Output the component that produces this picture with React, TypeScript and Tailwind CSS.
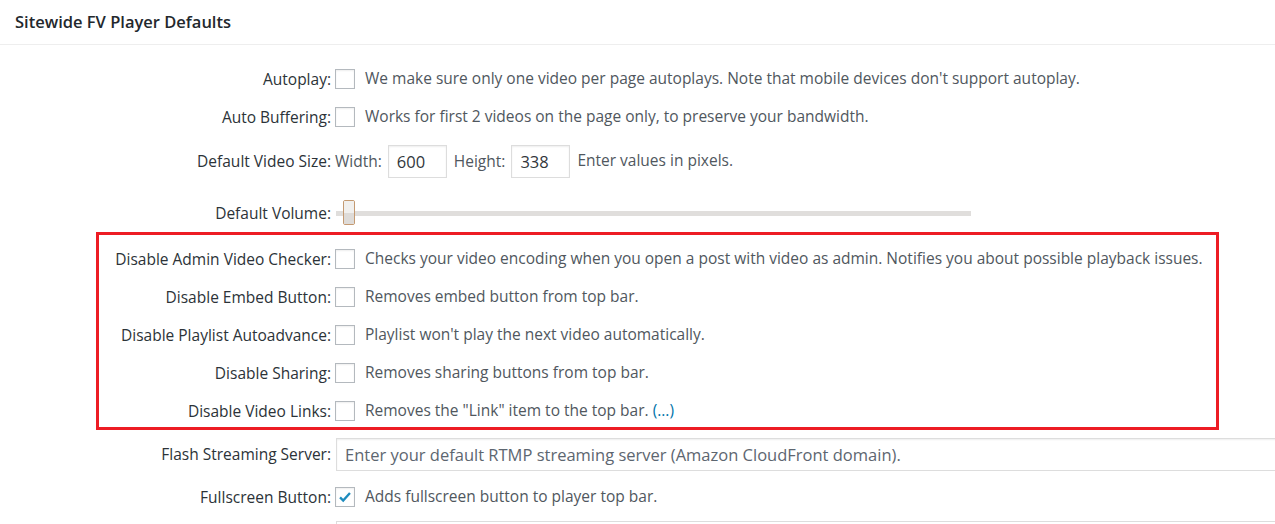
import React from "react";

const font = { fontFamily: '"Open Sans", "Noto Sans", sans-serif' };

function Label({ children }: { children: React.ReactNode }) {
  return (
    <div className="w-[331px] shrink-0 whitespace-nowrap pt-[2px] text-right text-[15.5px] text-[#2c3338]">{children}</div>
  );
}

function Checkbox({ checked = false }: { checked?: boolean }) {
  return (
    <span className="ml-1 flex h-5 w-5 shrink-0 items-center justify-center border border-[#b4b9be] bg-white shadow-[inset_0_1px_2px_rgba(0,0,0,0.07)]">
      {checked && (
        <svg viewBox="0 0 20 20" className="h-5 w-5">
          <path d="M4.5 10.5l3.5 3.5 7.5-8.5" fill="none" stroke="#1e8cbe" strokeWidth="2.6" />
        </svg>
      )}
    </span>
  );
}

function CheckRow({ label, desc, checked }: { label: string; desc: React.ReactNode; checked?: boolean }) {
  return (
    <div className="flex h-[38px] items-center">
      <Label>{label}</Label>
      <Checkbox checked={checked} />
      <span className="ml-[10px] whitespace-nowrap text-[15.5px] text-[#50575e]">{desc}</span>
    </div>
  );
}

const boxInput =
  "h-[33px] border border-[#dddddd] px-2 text-[16.5px] text-[#32373c] shadow-[inset_0_1px_2px_rgba(0,0,0,0.07)] outline-none";

export default function App() {
  return (
    <div className="relative h-[524px] w-[1275px] overflow-hidden bg-white" style={font}>
      <div className="flex h-[45px] items-center border-b border-[#eeeeee] pl-[15px]">
        <h2 className="text-[16.5px] font-semibold text-[#23282d]">Sitewide FV Player Defaults</h2>
      </div>

      <div className="pt-[15px]">
        <CheckRow
          label="Autoplay:"
          desc="We make sure only one video per page autoplays. Note that mobile devices don't support autoplay."
        />
        <CheckRow label="Auto Buffering:" desc="Works for first 2 videos on the page only, to preserve your bandwidth." />

        <div className="flex h-[50px] items-center whitespace-nowrap text-[15.5px]">
          <Label>Default Video Size:</Label>
          <span className="ml-1 pt-[2px] text-[#50575e]">Width:</span>
          <input readOnly value="600" className={`ml-[6px] w-[59px] ${boxInput}`} />
          <span className="ml-[7px] pt-[2px] text-[#50575e]">Height:</span>
          <input readOnly value="338" className={`ml-[6px] w-[59px] ${boxInput}`} />
          <span className="ml-[7px] text-[#50575e]">Enter values in pixels.</span>
        </div>

        <div className="flex h-[54px] items-center">
          <Label>Default Volume:</Label>
          <div className="relative ml-[5px] h-[26px] w-[635px]">
            <div className="absolute left-0 right-0 top-[11px] h-[5px] bg-[#e0dedc]" />
            <div className="absolute left-[7px] top-0 flex h-[25px] w-[12px] flex-col overflow-hidden rounded-[2px] border border-[#c49a72]">
              <div className="flex-1 bg-[#f1f0ee]" />
              <div className="flex-1 bg-[#dedbd8]" />
            </div>
          </div>
        </div>

        <CheckRow
          label="Disable Admin Video Checker:"
          desc="Checks your video encoding when you open a post with video as admin. Notifies you about possible playback issues."
        />
        <CheckRow label="Disable Embed Button:" desc="Removes embed button from top bar." />
        <CheckRow label="Disable Playlist Autoadvance:" desc="Playlist won't play the next video automatically." />
        <CheckRow label="Disable Sharing:" desc="Removes sharing buttons from top bar." />
        <CheckRow
          label="Disable Video Links:"
          desc={
            <>
              Removes the "Link" item to the top bar. <span className="text-[#0073aa]">(...)</span>
            </>
          }
        />

        <div className="flex h-[48px] items-center">
          <Label>Flash Streaming Server:</Label>
          <input
            readOnly
            placeholder="Enter your default RTMP streaming server (Amazon CloudFront domain)."
            className={`ml-[5px] w-[1000px] shrink-0 placeholder:text-[#5d6670] ${boxInput}`}
          />
        </div>

        <CheckRow label="Fullscreen Button:" desc="Adds fullscreen button to player top bar." checked />

        <div className="flex pt-[5px]">
          <div className="w-[336px] shrink-0" />
          <div className="h-[33px] w-[1000px] shrink-0 border border-[#dddddd]" />
        </div>
      </div>

      {/* highlight box drawn over the settings */}
      <div className="pointer-events-none absolute left-[96px] top-[232px] h-[198px] w-[1123px] border-[3px] border-[#ed1c24]" />
    </div>
  );
}
